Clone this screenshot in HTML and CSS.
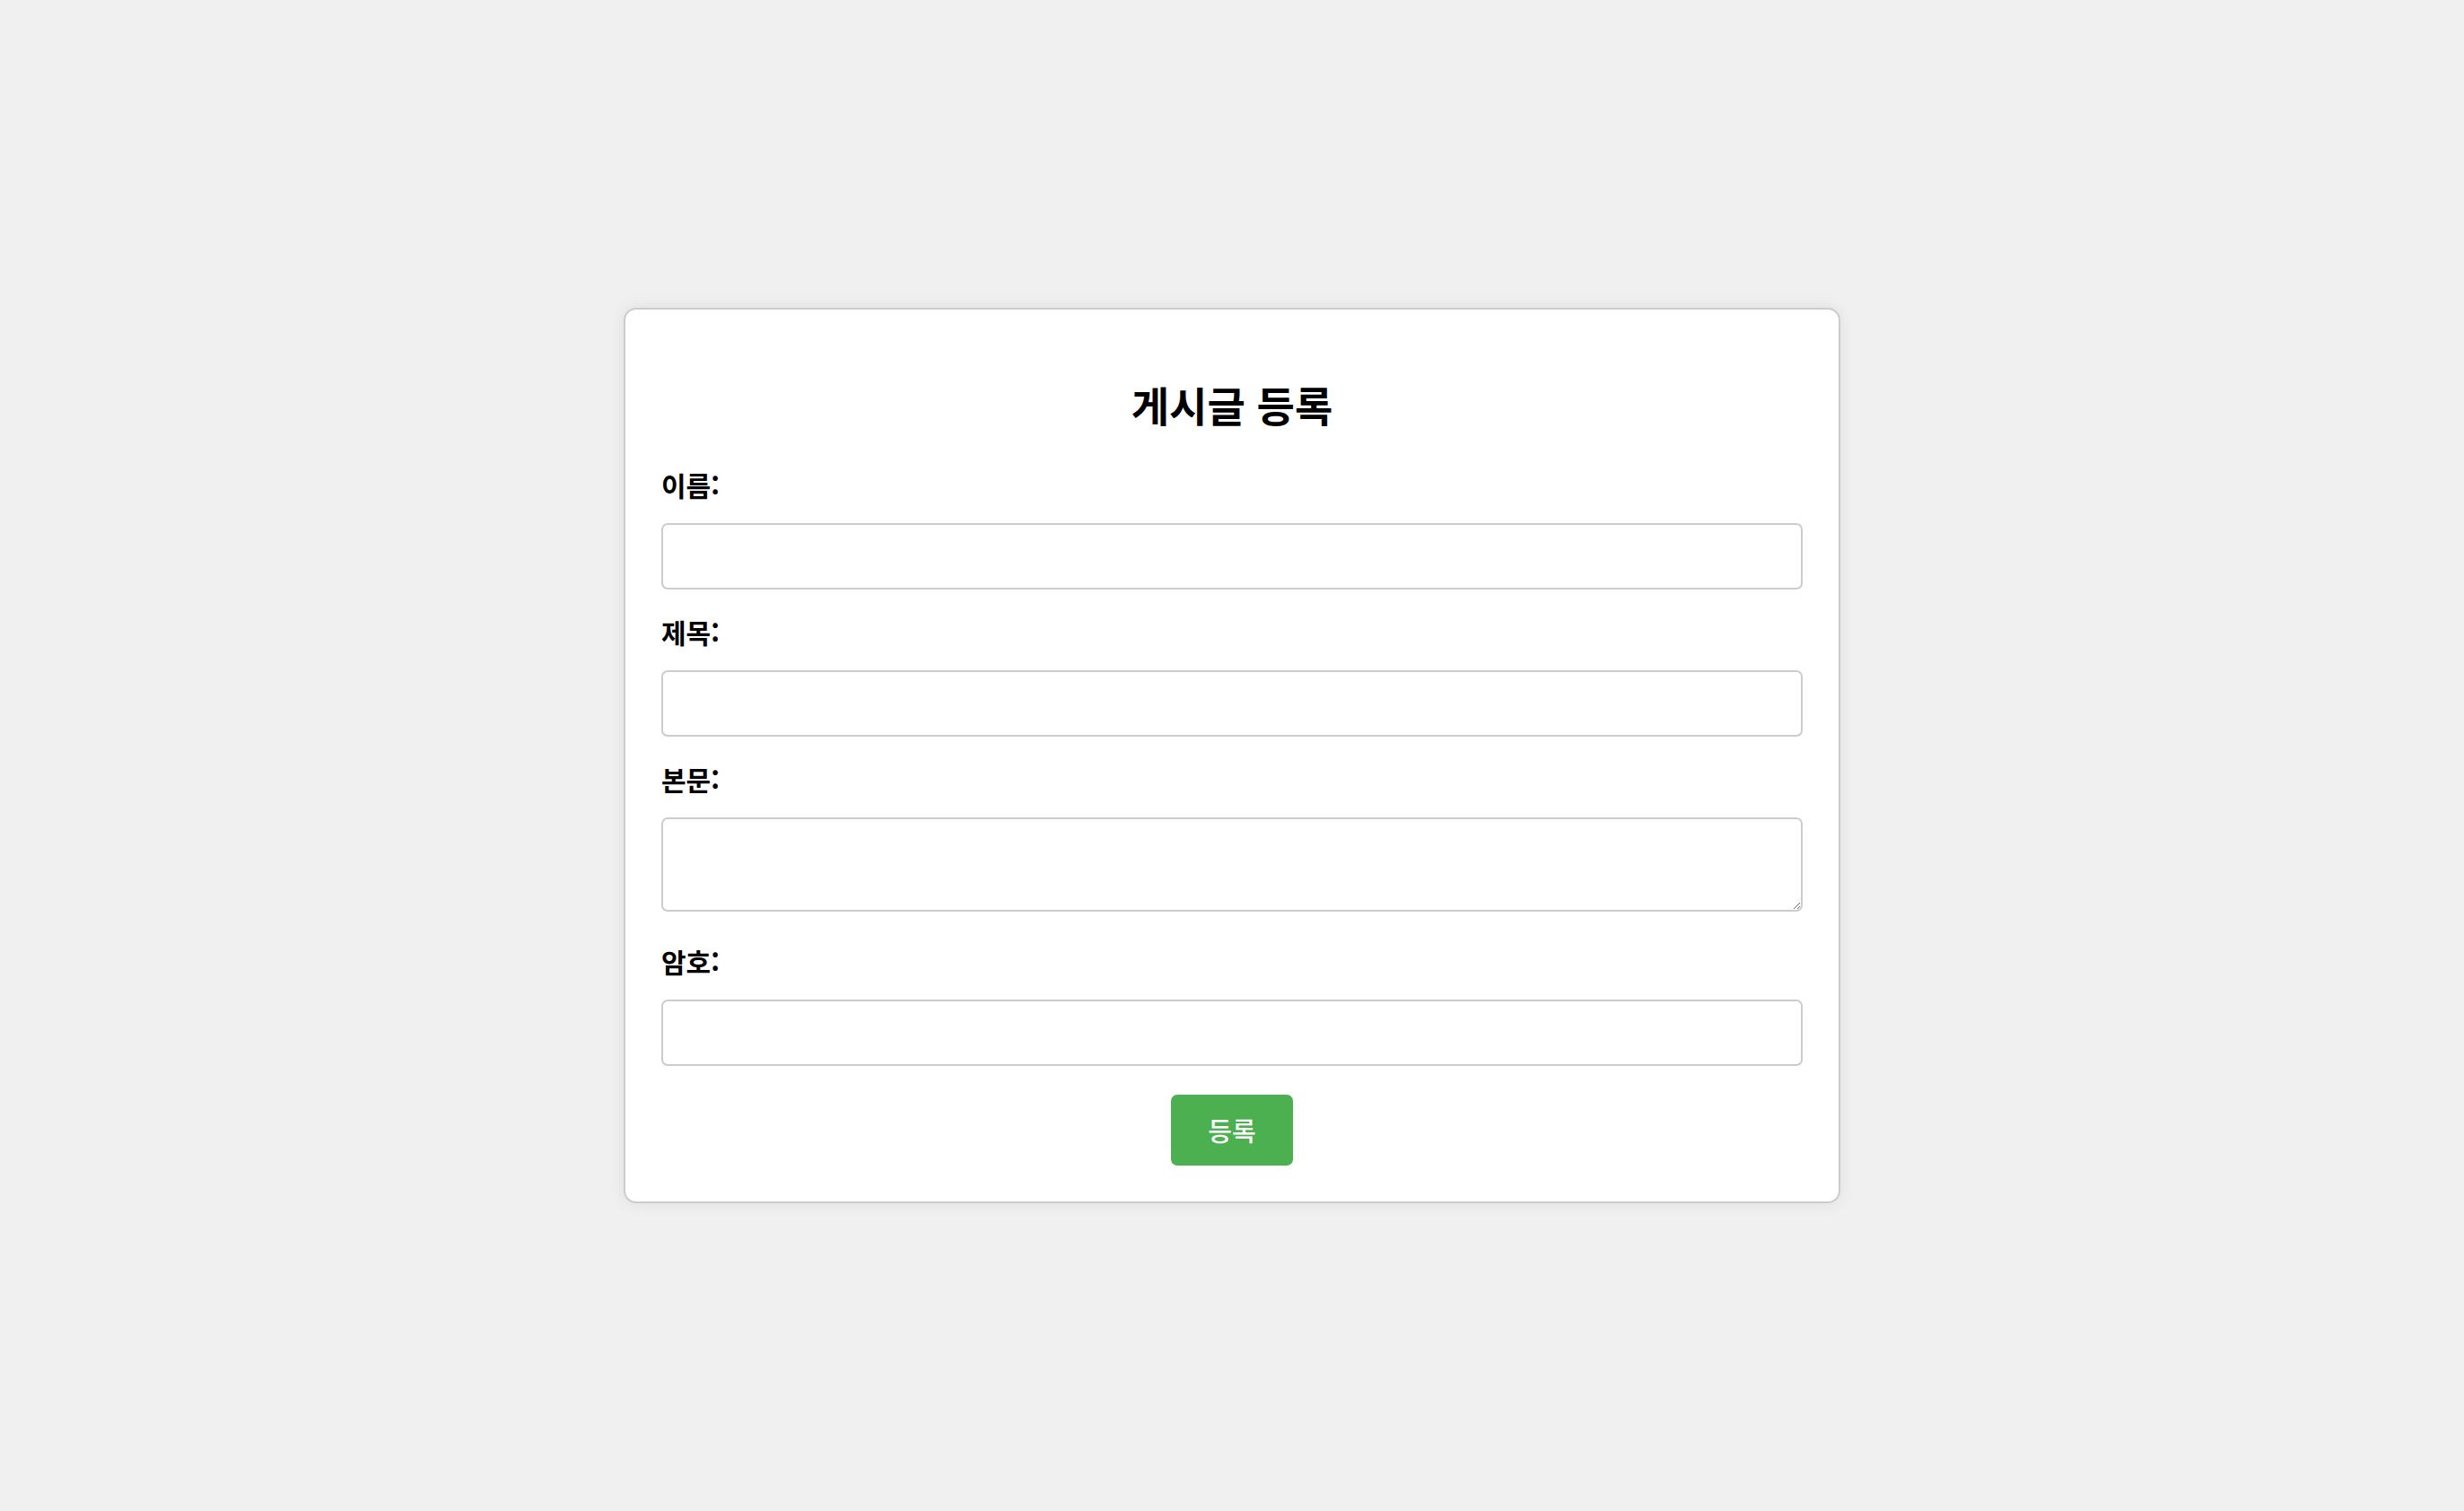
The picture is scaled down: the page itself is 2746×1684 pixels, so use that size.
FILE: index.html
```html
<!DOCTYPE html>
<html lang="ko">
<head>
<meta charset="utf-8">
<title>게시글 등록</title>
<link rel="stylesheet" href="styles.css">
</head>
<body>
<div class="page">
  <form class="card">
    <h2 class="title">게시글 등록</h2>
    <label class="label" for="name">이름:</label>
    <input class="field" id="name" type="text">
    <label class="label" for="subject">제목:</label>
    <input class="field" id="subject" type="text">
    <label class="label" for="body">본문:</label>
    <textarea class="field area" id="body"></textarea>
    <label class="label" for="pw">암호:</label>
    <input class="field field-last" id="pw" type="password">
    <div class="actions">
      <button class="submit" type="button">등록</button>
    </div>
  </form>
</div>
</body>
</html>
```

FILE: styles.css
```css
html, body {
  margin: 0;
  padding: 0;
}
body {
  background: #f0f0f0;
  font-family: "Noto Sans CJK KR", "Noto Sans", sans-serif;
  color: #000;
}
.page {
  height: 100vh;
  display: flex;
  align-items: center;
  justify-content: center;
}
.card {
  width: 1356px;
  box-sizing: border-box;
  background: #fff;
  border: 2px solid #cccccc;
  border-radius: 14px;
  box-shadow: 0 0 18px rgba(0, 0, 0, 0.08);
  padding: 40px 40px 40px;
  display: flex;
  flex-direction: column;
}
.title {
  margin: 40px 0 50px;
  font-size: 46px;
  line-height: 50px;
  font-weight: 700;
  text-align: center;
}
.label {
  display: block;
  font-size: 30px;
  line-height: 30px;
  font-weight: 700;
  margin-bottom: 28px;
}
.field {
  display: block;
  box-sizing: border-box;
  width: 100%;
  height: 74px;
  margin: 0 0 32px;
  padding: 0 18px;
  border: 2px solid #cccccc;
  border-radius: 7px;
  background: #fff;
  font-family: inherit;
  font-size: 28px;
  outline: none;
}
.field-last {
  margin-bottom: 32px;
}
.area {
  height: 105px;
  margin-bottom: 40px;
  padding: 18px;
  resize: vertical;
}
.actions {
  display: flex;
  justify-content: center;
}
.submit {
  width: 136px;
  background: #4caf50;
  color: #fff;
  border: none;
  border-radius: 7px;
  padding: 22px 0;
  font-family: inherit;
  font-size: 29px;
  line-height: 35px;
  font-weight: 500;
  cursor: pointer;
}
```
